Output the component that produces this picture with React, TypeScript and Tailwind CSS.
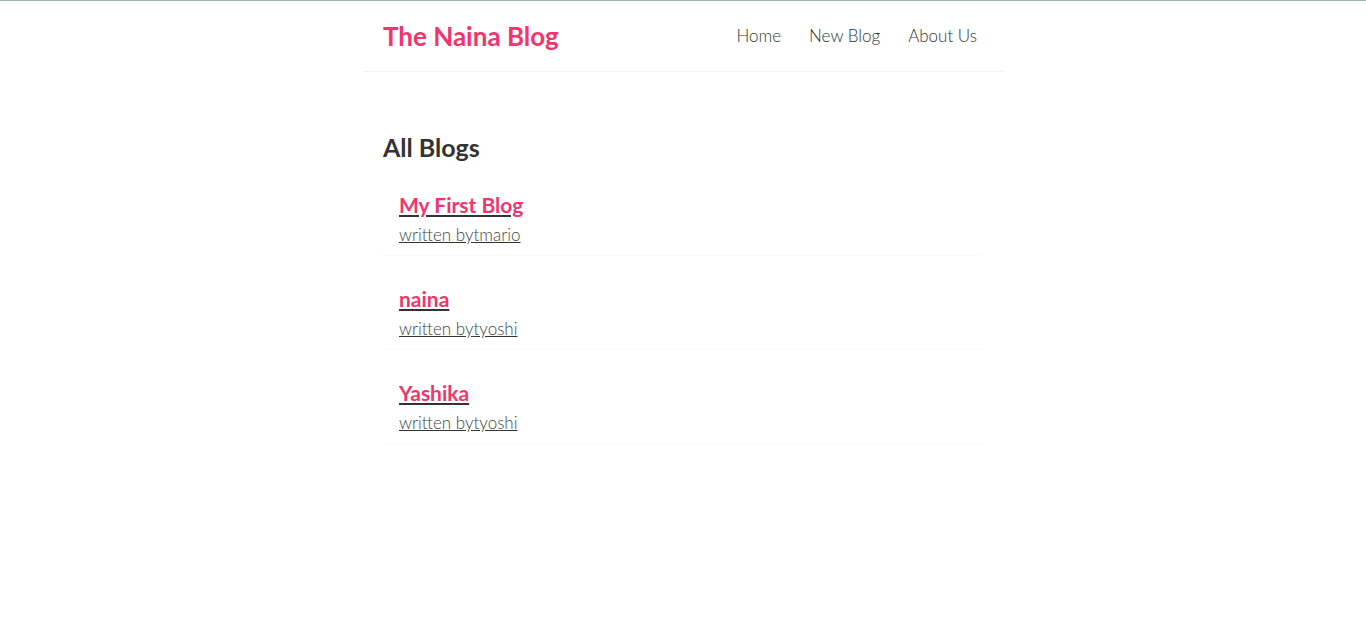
import React from "react";

const blogs = [
	{ id: 1, title: "My First Blog", author: "mario" },
	{ id: 2, title: "naina", author: "yoshi" },
	{ id: 3, title: "Yashika", author: "yoshi" },
];

const Navbar = () => {
	return (
		<nav className="mx-auto flex max-w-[640px] items-center justify-between border-b border-[#f2f2f2] p-5">
			<h1 className="text-[26px] font-bold leading-[30px] text-[#f1356d]">The Naina Blog</h1>
			<div className="flex gap-4 text-[17px] font-light leading-[20px] text-[#333]">
				<a href="/" className="px-1.5">Home</a>
				<a href="/create" className="px-1.5">New Blog</a>
				<a href="/about" className="px-1.5">About Us</a>
			</div>
		</nav>
	);
};

export default function App() {
	return (
		<div
			className="min-h-[639px] border-t border-[#9fb3b3] bg-white text-[#333]"
			style={{ fontFamily: "Lato, 'Open Sans', sans-serif" }}
		>
			<Navbar />
			<div className="mx-auto mt-10 max-w-[640px] p-5">
				<div className="home">
					<h2 className="text-[25px] font-bold leading-[30px] text-[#333]">All Blogs</h2>
					{blogs.map((blog) => (
						<a
							key={blog.id}
							href={`/blogs/${blog.id}`}
							className="my-5 block border-b border-[#fafafa] px-4 py-2.5 underline decoration-[#333]"
						>
							<h2 className="mb-2 text-[21px] font-bold leading-[25px] text-[#f1356d]">{blog.title}</h2>
							<p className="text-[17px] font-light leading-[20px] text-[#444]">written by{"t" + blog.author}</p>
						</a>
					))}
				</div>
			</div>
		</div>
	);
}
